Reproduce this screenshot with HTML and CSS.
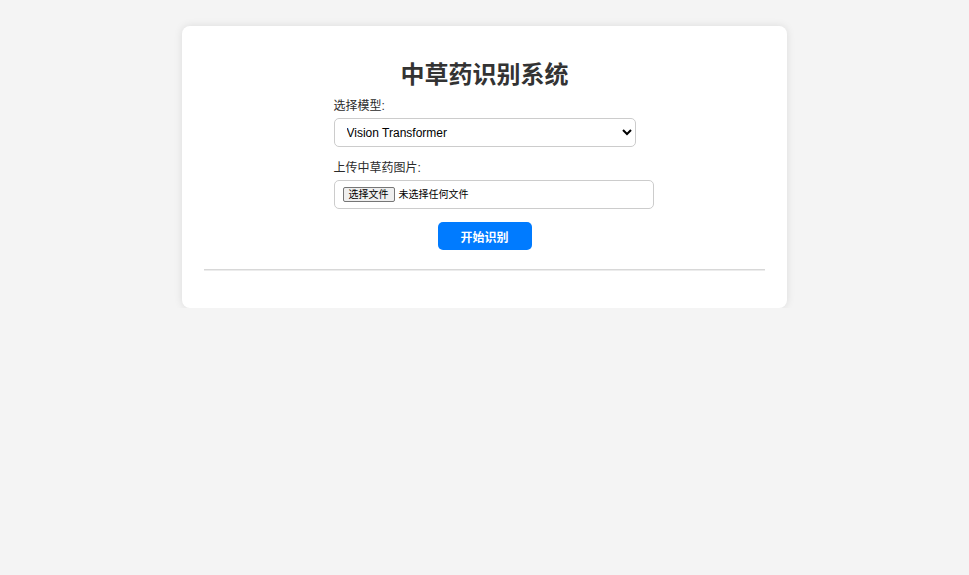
FILE: index.html
```html
<!DOCTYPE html>
<html lang="zh-CN">
<head>
<meta charset="utf-8">
<title>中草药识别系统</title>
<link rel="stylesheet" href="styles.css">
</head>
<body>
<div class="card">
  <h1 class="title">中草药识别系统</h1>
  <form class="form">
    <label class="label" for="model">选择模型:</label>
    <select class="select" id="model">
      <option>Vision Transformer</option>
    </select>
    <label class="label label-file">上传中草药图片:</label>
    <div class="file-box">
      <span class="file-btn">选择文件</span>
      <span class="file-text">未选择任何文件</span>
    </div>
    <div class="actions">
      <button type="button" class="submit">开始识别</button>
    </div>
  </form>
  <hr class="divider">
</div>
</body>
</html>
```
FILE: styles.css
```css
html, body {
  margin: 0;
  padding: 0;
}
body {
  background: #f4f4f4;
  font-family: "Liberation Sans", "Noto Sans CJK SC", sans-serif;
  color: #333;
  padding-top: 26px;
}
.card {
  box-sizing: border-box;
  width: 605px;
  margin: 0 auto;
  background: #fff;
  border-radius: 8px;
  box-shadow: 0 0 8px rgba(0, 0, 0, 0.1);
  padding: 22px 22px 37px;
}
.title {
  margin: 13px 0 9px;
  font-size: 24px;
  line-height: 28px;
  font-weight: bold;
  text-align: center;
  color: #333;
}
.form {
  width: 302px;
  margin: 0 auto;
}
.label {
  display: block;
  font-size: 12px;
  line-height: 16px;
  margin-bottom: 4px;
  color: #2b2b2b;
}
.label-file {
  margin-top: 13px;
}
.select {
  display: block;
  box-sizing: border-box;
  width: 302px;
  height: 29px;
  padding: 0 8px;
  font-family: "Liberation Sans", "Noto Sans CJK SC", sans-serif;
  font-size: 12px;
  color: #000;
  background: #fff;
  border: 1px solid #ccc;
  border-radius: 5px;
  outline: none;
}
.file-box {
  box-sizing: border-box;
  width: 320px;
  height: 29px;
  border: 1px solid #ccc;
  border-radius: 5px;
  padding: 0 8px;
  display: flex;
  align-items: center;
  gap: 4px;
  font-size: 10px;
  color: #000;
}
.file-btn {
  box-sizing: border-box;
  height: 15px;
  line-height: 13px;
  padding: 0 5px;
  border: 1px solid #767676;
  border-radius: 2px;
  background: #efefef;
  font-size: 10px;
}
.file-text {
  line-height: 13px;
}
.actions {
  margin-top: 13px;
  text-align: center;
  width: 302px;
}
.submit {
  box-sizing: border-box;
  width: 94px;
  height: 28px;
  border: 0;
  border-radius: 5px;
  background: #007bff;
  color: #fff;
  font-family: "Liberation Sans", "Noto Sans CJK SC", sans-serif;
  font-size: 12px;
  font-weight: bold;
  cursor: pointer;
}
.divider {
  margin: 19px 0 0;
  border: 0;
  border-top: 1px solid #d8d8d8;
  border-bottom: 1px solid #ececec;
  height: 0;
}
```
